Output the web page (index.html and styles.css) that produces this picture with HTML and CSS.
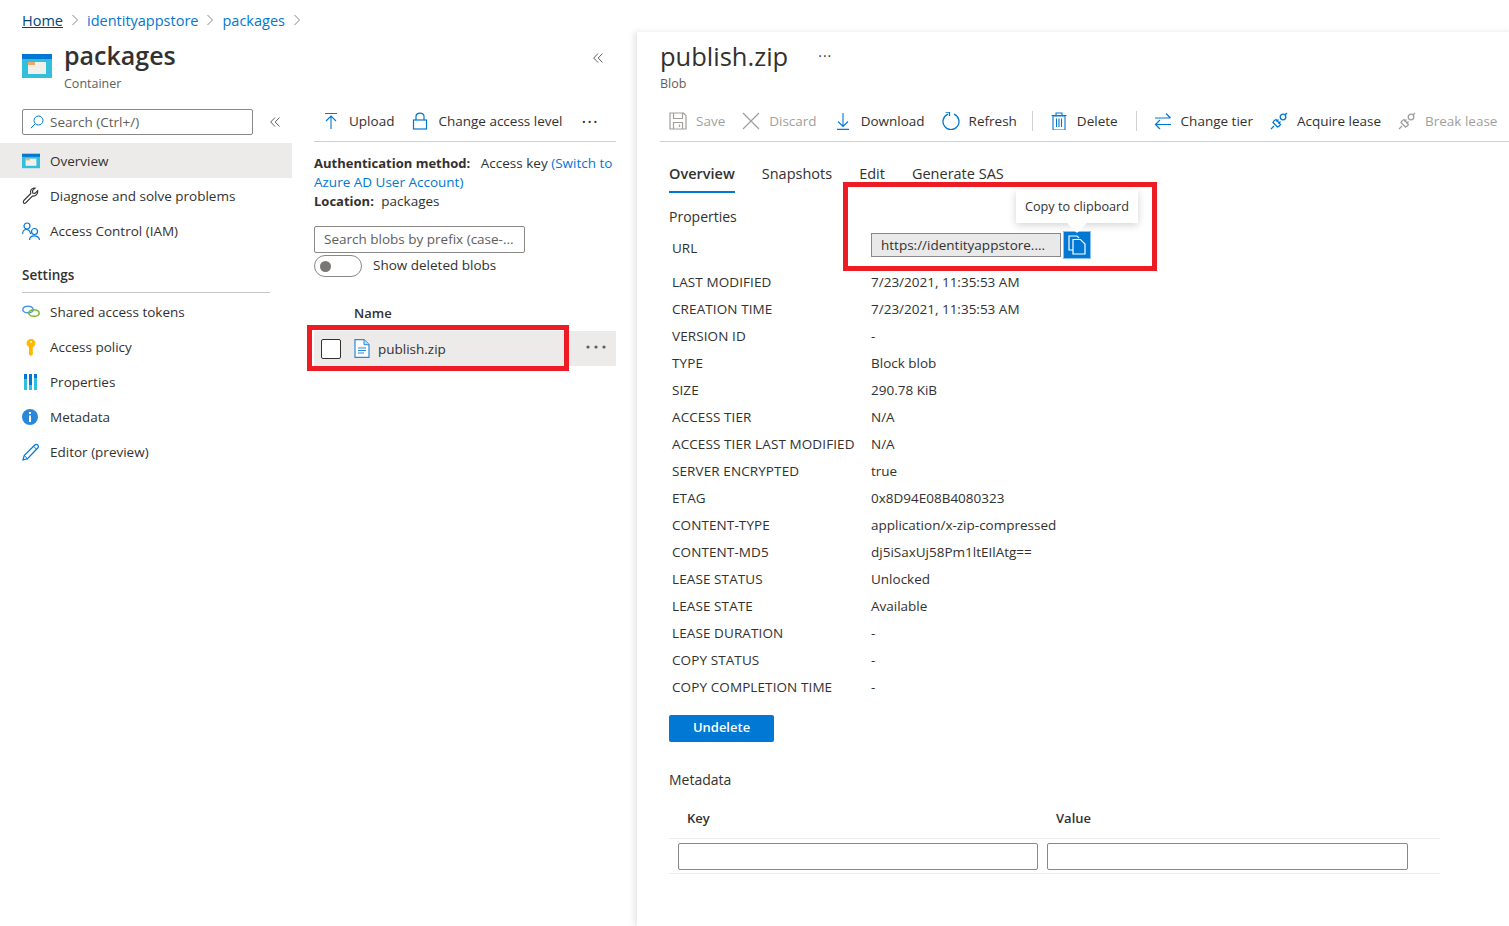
FILE: index.html
```html
<!DOCTYPE html>
<html lang="en">
<head>
  <meta charset="UTF-8">
  <title>publish.zip - Microsoft Azure</title>
  <link rel="stylesheet" href="styles.css">
</head>
<body>
  <svg class="defs" width="0" height="0">
    <symbol id="box" viewBox="0 0 30 24">
      <rect width="30" height="24" fill="#32bedd"/>
      <rect width="30" height="5" fill="#0078d4"/>
      <rect x="6" y="8" width="18" height="12" fill="#f2f0ea"/>
      <rect x="6" y="8" width="7" height="3" fill="#f0a868"/>
    </symbol>
    <symbol id="lease" viewBox="0 0 18 18">
      <g fill="none" stroke="currentColor" stroke-width="1.3">
        <path d="M1 17l3-3"/>
        <path d="M3 10.500l4.500 4.500c1.500-.4 2.400-1.200 3-2.500L6 7.500c-1.500.5-2.500 1.500-3 3z"/>
        <circle cx="13" cy="5" r="2.800"/>
        <path d="M15 3l2-2M6.500 9.500l2-2M8.500 11.500l2-2"/>
      </g>
    </symbol>
    <symbol id="dbl" viewBox="0 0 10 10">
      <path d="M5 .5L.7 5 5 9.500M9.500 .5L5.200 5l4.300 4.500" fill="none" stroke="#605e5c"/>
    </symbol>
  </svg>

  <div class="app">
    <!-- Container blade -->
    <div class="left-pane">
      <nav class="crumbs">
        <a class="crumb-home">Home</a>
        <svg class="chev" viewBox="0 0 8 12"><path d="M1.500 1l5 5-5 5"/></svg>
        <a>identityappstore</a>
        <svg class="chev" viewBox="0 0 8 12"><path d="M1.500 1l5 5-5 5"/></svg>
        <a>packages</a>
        <svg class="chev" viewBox="0 0 8 12"><path d="M1.500 1l5 5-5 5"/></svg>
      </nav>

      <header class="blade-head">
        <svg class="blade-icon"><use href="#box"/></svg>
        <div class="blade-title">
          <h1>packages</h1>
          <p>Container</p>
        </div>
        <svg class="collapse top-collapse"><use href="#dbl"/></svg>
      </header>

      <div class="blade-body">
        <aside class="side">
          <div class="side-search-row">
            <div class="side-search">
              <svg class="ico14" viewBox="0 0 14 14"><circle cx="8.500" cy="5.500" r="4.500" fill="none" stroke="#0078d4"/><path d="M5.300 8.700L.8 13.200" stroke="#0078d4" fill="none"/></svg>
              <span>Search (Ctrl+/)</span>
            </div>
            <svg class="collapse"><use href="#dbl"/></svg>
          </div>

          <a class="side-item active">
            <svg class="side-ico"><use href="#box"/></svg>Overview
          </a>
          <a class="side-item">
            <svg class="side-ico" viewBox="0 0 18 18"><path d="M1.800 13.500l7-7c-.8-2.500.2-4.700 3-5.500l1.300.1-2.600 2.600.2 2.300 2.300.3 2.700-2.700c.5 3-1.800 6-5.300 5.400l-6.800 7c-1.800 1-3-.6-1.800-2.500z" fill="none" stroke="#333" stroke-width="1.100"/></svg>Diagnose and solve problems
          </a>
          <a class="side-item">
            <svg class="side-ico" viewBox="0 0 18 18"><g fill="none" stroke="#0078d4" stroke-width="1.200"><circle cx="5" cy="4" r="3"/><path d="M.6 12c0-6 7-6 8 0"/><circle cx="12.500" cy="9.500" r="3"/><path d="M7.600 18c0-5.500 9-5.500 10 0"/></g></svg>Access Control (IAM)
          </a>

          <h3 class="side-head">Settings</h3>

          <a class="side-item">
            <svg class="side-ico" viewBox="0 0 18 18"><ellipse cx="6" cy="6.500" rx="5.200" ry="3.300" fill="none" stroke="#3f9ae8" stroke-width="1.500"/><ellipse cx="12" cy="10" rx="5.200" ry="3.300" fill="none" stroke="#7fb82e" stroke-width="1.500"/></svg>Shared access tokens
          </a>
          <a class="side-item">
            <svg class="side-ico" viewBox="0 0 18 18"><path d="M9 1c2.500 0 4.500 2 4.500 4.200S11.500 9 10.800 9v7.500L9 18l-2-1.500V9C6 8.500 4.500 7.500 4.500 5.200 4.500 3 6.500 1 9 1z" fill="#fdb900"/><circle cx="9" cy="4" r="1" fill="#fff3c4"/></svg>Access policy
          </a>
          <a class="side-item">
            <svg class="side-ico" viewBox="0 0 18 18"><path d="M2 1h3v16H2zM7 1h3v16H7zM12 1h3v16h-3z" fill="#32bedd"/><path d="M2 1h3v5H2zM7 1h3v11H7zM12 1h3v4h-3z" fill="#0078d4"/></svg>Properties
          </a>
          <a class="side-item">
            <svg class="side-ico" viewBox="0 0 18 18"><circle cx="8" cy="9" r="8" fill="#2b88d8"/><rect x="7" y="7.500" width="2" height="6.500" fill="#fff"/><rect x="7" y="4" width="2" height="2" fill="#fff"/></svg>Metadata
          </a>
          <a class="side-item">
            <svg class="side-ico" viewBox="0 0 18 18"><path d="M1 17l1.200-4.500L12.800 2c1-.9 2-.9 2.900 0s1 2 0 3L5.500 15.700z" fill="none" stroke="#0078d4" stroke-width="1.200"/><path d="M11.500 3.200l3.200 3.200M2.200 12.500l3.300 3.200" fill="none" stroke="#0078d4"/></svg>Editor (preview)
          </a>
        </aside>

        <section class="list">
          <div class="cmd-bar list-bar">
            <a class="cmd">
              <svg class="cmd-ico" viewBox="0 0 16 18"><path d="M2 1.500h12M8 17V4.500M3 9l5-5 5 5" fill="none" stroke="#0078d4" stroke-width="1.100"/></svg>Upload
            </a>
            <a class="cmd">
              <svg class="cmd-ico" viewBox="0 0 16 18"><rect x="1.500" y="8" width="13" height="9" fill="none" stroke="#0078d4" stroke-width="1.200"/><path d="M4 8V4.500c0-4.500 8-4.500 8 0V8" fill="none" stroke="#0078d4" stroke-width="1.200"/></svg>Change access level
            </a>
            <span class="dots-small">···</span>
          </div>

          <div class="auth">
            <div><b class="auth-method">Authentication method:</b> Access key <a>(Switch to</a></div>
            <div><a>Azure AD User Account)</a></div>
            <div><b>Location:</b> packages</div>
          </div>

          <div class="blob-search">Search blobs by prefix (case-...</div>
          <div class="toggle-row">
            <span class="toggle"><i></i></span>
            <span>Show deleted blobs</span>
          </div>

          <div class="name-head">Name</div>
          <div class="blob-row">
            <span class="check"></span>
            <svg class="file-ico" viewBox="0 0 16 19"><path d="M1 .7h9l5 5v12.600H1z" fill="#fff" stroke="#2b88d8" stroke-width="1.200"/><path d="M10 .7v5h5" fill="#c7e0f4" stroke="#2b88d8"/><path d="M4 9h8M4 11.500h8M4 14h6" stroke="#2b88d8"/></svg>
            <span class="blob-name">publish.zip</span>
            <svg class="dots-row" viewBox="0 0 20 4"><circle cx="2" cy="2" r="1.600"/><circle cx="10" cy="2" r="1.600"/><circle cx="18" cy="2" r="1.600"/></svg>
            <span class="red-box row-mark"></span>
          </div>
        </section>
      </div>
    </div>

    <!-- Blob blade -->
    <main class="detail">
      <div class="detail-head">
        <h2>publish.zip</h2>
        <span class="dots-small head-dots">···</span>
      </div>
      <p class="detail-sub">Blob</p>

      <div class="cmd-bar detail-bar">
        <a class="cmd off save">
          <svg class="cmd-ico" viewBox="0 0 18 18"><path d="M1 1h13.500L17 3.500V17H1z M4.500 1v5.500h9V1 M4.500 17v-6.500h9V17 M10.500 12.500V15" fill="none" stroke="#a19f9d" stroke-width="1.200"/></svg>Save
        </a>
        <a class="cmd off">
          <svg class="cmd-ico" viewBox="0 0 18 18"><path d="M1 1l16 16M17 1L1 17" fill="none" stroke="#a19f9d" stroke-width="1.200"/></svg>Discard
        </a>
        <a class="cmd">
          <svg class="cmd-ico" viewBox="0 0 18 18"><path d="M9 1v13M4 9.500l5 5 5-5M3 17.400h12" fill="none" stroke="#0078d4" stroke-width="1.100"/></svg>Download
        </a>
        <a class="cmd">
          <svg class="cmd-ico" viewBox="0 0 18 18"><path d="M6 2.200a8 8 0 1 0 6 0" fill="none" stroke="#0078d4" stroke-width="1.300"/><path d="M2.500 1h4v4" fill="none" stroke="#0078d4" stroke-width="1.300" transform="translate(1 -1)"/></svg>Refresh
        </a>
        <span class="sep first-sep"></span>
        <a class="cmd">
          <svg class="cmd-ico" viewBox="0 0 18 18"><path d="M3 4h12v14H3zM1.500 3.500h15M6 3.500V1h6v2.500M6.500 6.500V15M9 6.500V15M11.500 6.500V15" fill="none" stroke="#0078d4" stroke-width="1.100"/></svg>Delete
        </a>
        <span class="sep"></span>
        <a class="cmd">
          <svg class="cmd-ico" viewBox="0 0 18 18"><path d="M1 6h15.500M12 1.500L16.500 6 M17 12.500H1.500M6 8l-4.500 4.500L6 17" fill="none" stroke="#0078d4" stroke-width="1.200"/></svg>Change tier
        </a>
        <a class="cmd lease-on">
          <svg class="cmd-ico"><use href="#lease"/></svg>Acquire lease
        </a>
        <a class="cmd off lease-off">
          <svg class="cmd-ico"><use href="#lease"/></svg>Break lease
        </a>
      </div>

      <div class="tabs">
        <a class="tab on">Overview</a>
        <a class="tab">Snapshots</a>
        <a class="tab">Edit</a>
        <a class="tab">Generate SAS</a>
      </div>

      <div class="props-title">Properties</div>
      <div class="url-row">
        <span class="prop-key">URL</span>
        <div class="url-field">
          <span class="url-value">https://identityappstore....</span>
          <span class="copy-btn">
            <svg viewBox="0 0 18 20" width="18" height="20"><path d="M5 15H1V1h8l2 2" fill="none" stroke="#fff" stroke-width="1.200"/><path d="M5 4.500h7.500L17 9v10H5z" fill="#0078d4" stroke="#fff" stroke-width="1.200"/></svg>
          </span>
          <div class="tip">Copy to clipboard<i></i></div>
        </div>
        <span class="red-box url-mark"></span>
      </div>

      <dl class="props">
        <dt>LAST MODIFIED</dt><dd>7/23/2021, 11:35:53 AM</dd>
        <dt>CREATION TIME</dt><dd>7/23/2021, 11:35:53 AM</dd>
        <dt>VERSION ID</dt><dd>-</dd>
        <dt>TYPE</dt><dd>Block blob</dd>
        <dt>SIZE</dt><dd>290.78 KiB</dd>
        <dt>ACCESS TIER</dt><dd>N/A</dd>
        <dt>ACCESS TIER LAST MODIFIED</dt><dd>N/A</dd>
        <dt>SERVER ENCRYPTED</dt><dd>true</dd>
        <dt>ETAG</dt><dd>0x8D94E08B4080323</dd>
        <dt>CONTENT-TYPE</dt><dd>application/x-zip-compressed</dd>
        <dt>CONTENT-MD5</dt><dd>dj5iSaxUj58Pm1ltEIlAtg==</dd>
        <dt>LEASE STATUS</dt><dd>Unlocked</dd>
        <dt>LEASE STATE</dt><dd>Available</dd>
        <dt>LEASE DURATION</dt><dd>-</dd>
        <dt>COPY STATUS</dt><dd>-</dd>
        <dt>COPY COMPLETION TIME</dt><dd>-</dd>
      </dl>

      <button class="undelete">Undelete</button>

      <div class="meta-title">Metadata</div>
      <div class="meta-table">
        <div class="meta-head"><span>Key</span><span>Value</span></div>
        <div class="meta-row"><span class="meta-input"></span><span class="meta-input wide"></span></div>
      </div>
    </main>
  </div>
</body>
</html>
```

FILE: styles.css
```css
* {
  box-sizing: border-box;
}

body {
  margin: 0;
  background: #fff;
  color: #323130;
  font-family: "Open Sans", "Noto Sans", sans-serif;
  font-size: 13.5px;
  overflow: hidden;
}

a {
  color: inherit;
  text-decoration: none;
}

.defs {
  position: absolute;
}

.app {
  display: flex;
  width: 1509px;
  height: 926px;
}

/* left blade */
.left-pane {
  width: 637px;
  flex: none;
}

.crumbs {
  display: flex;
  align-items: center;
  height: 20px;
  margin-top: 10px;
  padding-left: 22px;
  gap: 8px;
  font-size: 14.5px;
  color: #0078d4;
}

.crumb-home {
  color: #004578;
  text-decoration: underline;
}

.chev {
  width: 8px;
  height: 12px;
  fill: none;
  stroke: #8a8886;
}

.blade-head {
  display: flex;
  align-items: flex-start;
  height: 79px;
  padding: 9px 34px 0 22px;
}

.blade-icon {
  width: 30px;
  height: 24px;
  margin: 15px 12px 0 0;
}

.blade-title {
  flex: 1;
}

.blade-title h1 {
  margin: 0;
  font-size: 25px;
  line-height: 33px;
  font-weight: 600;
}

.blade-title p {
  margin: 3px 0 0;
  font-size: 12.5px;
  line-height: 17px;
  color: #605e5c;
}

.collapse {
  width: 10px;
  height: 10px;
  flex: none;
}

.top-collapse {
  margin-top: 14px;
}

.blade-body {
  display: flex;
}

.side {
  width: 292px;
  flex: none;
}

.side-search-row {
  display: flex;
  align-items: center;
  height: 26px;
  margin-bottom: 8px;
  padding-left: 22px;
}

.side-search {
  display: flex;
  align-items: center;
  gap: 6px;
  width: 231px;
  height: 26px;
  padding: 0 0 1px 7px;
  border: 1px solid #8a8886;
  border-radius: 2px;
  color: #605e5c;
}

.side-search-row .collapse {
  margin-left: 17px;
}

.ico14 {
  width: 14px;
  height: 14px;
}

.side-item {
  display: flex;
  align-items: center;
  height: 35px;
  padding-left: 22px;
  white-space: nowrap;
}

.side-item.active {
  background: #edebe9;
}

.side-ico {
  width: 18px;
  height: 18px;
  margin-right: 10px;
  flex: none;
}

.side-head {
  width: 248px;
  margin: 18px 0 1px 22px;
  padding-bottom: 8px;
  border-bottom: 1px solid #c8c6c4;
  font-size: 13.5px;
  line-height: 18px;
  font-weight: 600;
}

.list {
  width: 302px;
  margin-left: 22px;
}

.cmd-bar {
  display: flex;
  align-items: center;
  height: 33px;
  padding-bottom: 8px;
  border-bottom: 1px solid #d2d0ce;
}

.cmd {
  display: flex;
  align-items: center;
  white-space: nowrap;
}

.cmd-ico {
  width: 18px;
  height: 18px;
  margin-right: 9px;
  flex: none;
}

.list-bar {
  padding-left: 8px;
}

.list-bar .cmd {
  margin-right: 17px;
}

.list-bar .dots-small {
  margin-left: 2px;
}

.dots-small {
  font-size: 18px;
  letter-spacing: 1px;
  line-height: 18px;
}

.auth {
  margin-top: 12px;
  line-height: 19px;
  white-space: nowrap;
}

.auth b {
  font-size: 13px;
  font-weight: 700;
  margin-right: 4px;
}

.auth b.auth-method {
  margin-right: 7px;
}

.auth a {
  color: #0078d4;
}

.blob-search {
  width: 211px;
  height: 27px;
  margin-top: 15px;
  padding-left: 9px;
  border: 1px solid #8a8886;
  border-radius: 2px;
  line-height: 25px;
  color: #605e5c;
  white-space: nowrap;
  overflow: hidden;
}

.toggle-row {
  display: flex;
  align-items: center;
  gap: 11px;
  height: 22px;
  margin-top: 2px;
}

.toggle-row span:last-child {
  margin-top: -2px;
}

.toggle {
  display: flex;
  align-items: center;
  width: 48px;
  height: 22px;
  padding-left: 5px;
  border: 1px solid #8a8886;
  border-radius: 11px;
}

.toggle i {
  width: 11px;
  height: 11px;
  border-radius: 50%;
  background: #797775;
}

.name-head {
  margin-top: 27px;
  padding-left: 40px;
  font-size: 13px;
  line-height: 18px;
  font-weight: 600;
}

.blob-row {
  position: relative;
  display: flex;
  align-items: center;
  height: 35px;
  margin-top: 9px;
  padding-left: 7px;
  background: #edebe9;
}

.check {
  width: 20px;
  height: 20px;
  border: 1px solid #323130;
  border-radius: 2px;
  background: #fff;
}

.file-ico {
  width: 16px;
  height: 19px;
  margin: 0 8px 0 13px;
}

.blob-name {
  flex: 1;
}

.dots-row {
  width: 20px;
  height: 4px;
  margin: -3px 10px 0 0;
  fill: #605e5c;
}

.red-box {
  position: absolute;
  border: 5px solid #ed1c24;
}

.row-mark {
  left: -7px;
  top: -6px;
  width: 262px;
  height: 46px;
}

/* right blade */
.detail {
  position: relative;
  flex: 1;
  margin-top: 32px;
  padding-left: 23px;
  box-shadow: -3px 0 6px rgba(0, 0, 0, 0.1);
}

.detail-head {
  display: flex;
  align-items: center;
  height: 35px;
  margin: 6px 0 2px;
}

.detail-head h2 {
  margin: 0;
  font-size: 25.5px;
  font-weight: 400;
}

.head-dots {
  margin-left: 30px;
  font-size: 14px;
}

.detail-sub {
  margin: 0;
  font-size: 12.5px;
  line-height: 17px;
  color: #605e5c;
}

.detail-bar {
  margin-top: 17px;
  padding-left: 9px;
}

.detail-bar .cmd {
  margin-right: 17px;
}

.off {
  color: #a19f9d;
}

.sep {
  width: 1px;
  height: 20px;
  margin: 0 17px 0 1px;
  background: #d2d0ce;
}

.sep.first-sep {
  margin-left: -2px;
}

.lease-on {
  color: #323130;
}

.lease-on .cmd-ico {
  color: #0078d4;
}

.lease-off .cmd-ico {
  color: #a19f9d;
}

.tabs {
  display: flex;
  gap: 27px;
  height: 35px;
  margin-top: 19px;
  padding-left: 9px;
  font-size: 14.5px;
}

.tab {
  height: 32px;
  line-height: 25px;
}

.tab.on {
  height: 32px;
  border-bottom: 2px solid #0078d4;
  font-weight: 600;
}

.props-title {
  margin-top: 11px;
  padding-left: 9px;
  font-size: 14px;
  line-height: 20px;
}

.url-row {
  position: relative;
  display: flex;
  align-items: center;
  height: 28px;
  margin-top: 7px;
  padding-left: 12px;
}

.prop-key {
  width: 199px;
}

.url-field {
  position: relative;
  display: flex;
  align-items: center;
  gap: 2px;
  margin-bottom: 6px;
}

.url-value {
  width: 190px;
  height: 24px;
  padding-left: 9px;
  border: 1px solid #8a8886;
  background: #e9e9e9;
  line-height: 22px;
  white-space: nowrap;
}

.copy-btn {
  display: flex;
  align-items: center;
  justify-content: center;
  width: 28px;
  height: 28px;
  border: 1px solid #8ac2ec;
  background: #0078d4;
}

.tip {
  position: absolute;
  left: 145px;
  bottom: 36px;
  width: 122px;
  height: 33px;
  background: #fff;
  font-size: 12.7px;
  line-height: 33px;
  text-align: center;
  box-shadow: 0 2px 8px rgba(0, 0, 0, 0.18);
}

.tip i {
  position: absolute;
  left: 54px;
  top: 26px;
  width: 14px;
  height: 14px;
  background: #fff;
  transform: rotate(45deg);
}

.url-mark {
  left: 183px;
  top: -52px;
  width: 314px;
  height: 89px;
}

.props {
  display: grid;
  grid-template-columns: 199px 1fr;
  grid-auto-rows: 27px;
  margin: 7px 0 0;
  padding-left: 12px;
  line-height: 27px;
}

.props dt,
.props dd {
  margin: 0;
}

.props dt {
  letter-spacing: 0.1px;
}

.undelete {
  display: block;
  width: 105px;
  height: 27px;
  margin: 14px 0 0 9px;
  padding: 0 0 3px;
  border: 0;
  border-radius: 2px;
  background: #0078d4;
  color: #fff;
  font: 600 13px "Open Sans", sans-serif;
}

.meta-title {
  margin-top: 28px;
  padding-left: 9px;
  font-size: 14px;
  line-height: 20px;
}

.meta-table {
  width: 771px;
  margin: 18px 0 0 9px;
}

.meta-head {
  display: flex;
  height: 31px;
  padding: 1px 0 0 18px;
  border-bottom: 1px solid #edebe9;
  font-size: 13px;
  font-weight: 600;
}

.meta-head span {
  width: 369px;
}

.meta-row {
  display: flex;
  gap: 9px;
  height: 35px;
  padding: 4px 0 0 9px;
  border-bottom: 1px solid #edebe9;
}

.meta-input {
  width: 360px;
  height: 27px;
  border: 1px solid #8a8886;
  border-radius: 2px;
}

.meta-input.wide {
  width: 361px;
}
```
